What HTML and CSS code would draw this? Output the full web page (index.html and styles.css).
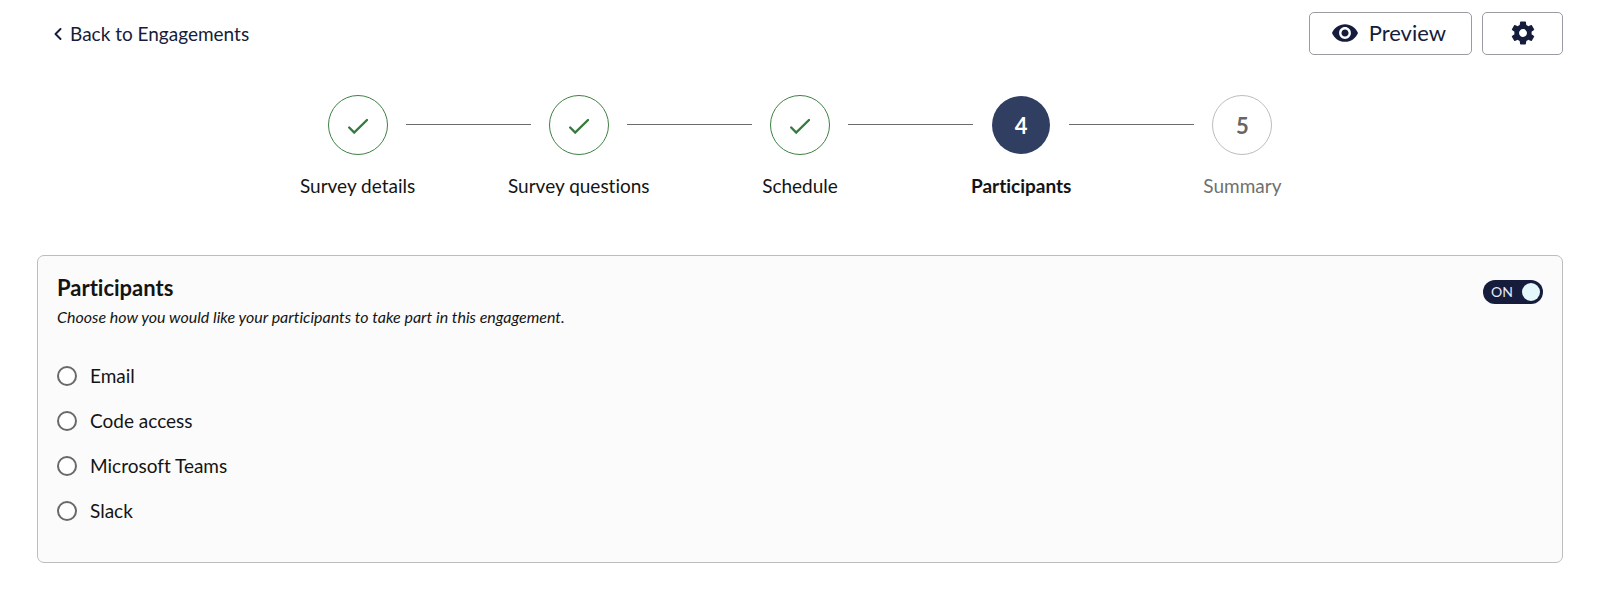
FILE: index.html
```html
<!DOCTYPE html>
<html lang="en">
<head>
<meta charset="utf-8">
<meta name="viewport" content="width=device-width, initial-scale=1">
<title>Participants</title>
<link rel="stylesheet" href="styles.css">
</head>
<body>
<header class="topbar">
  <a class="back" href="#">
    <svg class="back-icon" viewBox="0 0 8 12" aria-hidden="true"><path d="M6.500 1 1.500 6l5 5" fill="none" stroke="currentColor" stroke-width="1.900" stroke-linecap="round" stroke-linejoin="round"/></svg>
    <span>Back to Engagements</span>
  </a>
  <div class="actions">
    <button class="btn" type="button">
      <svg class="eye-icon" viewBox="1 4.500 22 15" aria-hidden="true"><path fill="currentColor" d="M12 4.500C7 4.500 2.730 7.610 1 12c1.730 4.390 6 7.500 11 7.500s9.270-3.110 11-7.500c-1.730-4.390-6-7.500-11-7.500zM12 17c-2.760 0-5-2.240-5-5s2.240-5 5-5 5 2.240 5 5-2.240 5-5 5zm0-8c-1.660 0-3 1.340-3 3s1.340 3 3 3 3-1.340 3-3-1.340-3-3-3z"/></svg>
      <span>Preview</span>
    </button>
    <button class="btn btn-settings" type="button" aria-label="Settings">
      <svg class="gear-icon" viewBox="2 2 20 20" aria-hidden="true"><path fill="currentColor" d="M19.140 12.940c.04-.3.06-.61.06-.94 0-.32-.02-.64-.07-.94l2.030-1.580c.18-.14.23-.41.12-.61l-1.920-3.320c-.12-.22-.37-.29-.59-.22l-2.390.96c-.5-.38-1.030-.7-1.620-.94l-.36-2.540c-.04-.24-.24-.41-.48-.41h-3.840c-.24 0-.43.17-.47.41l-.36 2.540c-.59.24-1.130.57-1.620.94l-2.390-.96c-.22-.08-.47 0-.59.22L2.740 8.870c-.12.21-.08.47.12.61l2.030 1.580c-.05.3-.09.63-.09.94s.02.64.07.94l-2.030 1.580c-.18.14-.23.41-.12.61l1.920 3.320c.12.22.37.29.59.22l2.390-.96c.5.38 1.030.7 1.620.94l.36 2.540c.05.24.24.41.48.41h3.840c.24 0 .44-.17.47-.41l.36-2.540c.59-.24 1.130-.56 1.620-.94l2.390.96c.22.08.47 0 .59-.22l1.920-3.320c.12-.22.07-.47-.12-.61l-2.010-1.580zM12 15.300c-1.820 0-3.300-1.480-3.300-3.300s1.480-3.300 3.300-3.300 3.300 1.480 3.300 3.300-1.480 3.300-3.300 3.300z"/></svg>
    </button>
  </div>
</header>

<main>
  <ol class="steps">
    <li class="step done">
      <span class="marker"><svg class="check-icon" viewBox="0 0 20 16" aria-hidden="true"><path d="M1.200 9.500 6.200 14.500 19 2" fill="none" stroke="currentColor" stroke-width="2.400" stroke-linecap="round"/></svg></span>
      <span class="label">Survey details</span>
    </li>
    <li class="step done">
      <span class="marker"><svg class="check-icon" viewBox="0 0 20 16" aria-hidden="true"><path d="M1.200 9.500 6.200 14.500 19 2" fill="none" stroke="currentColor" stroke-width="2.400" stroke-linecap="round"/></svg></span>
      <span class="label">Survey questions</span>
    </li>
    <li class="step done">
      <span class="marker"><svg class="check-icon" viewBox="0 0 20 16" aria-hidden="true"><path d="M1.200 9.500 6.200 14.500 19 2" fill="none" stroke="currentColor" stroke-width="2.400" stroke-linecap="round"/></svg></span>
      <span class="label">Schedule</span>
    </li>
    <li class="step current" aria-current="step">
      <span class="marker">4</span>
      <span class="label">Participants</span>
    </li>
    <li class="step upcoming">
      <span class="marker">5</span>
      <span class="label">Summary</span>
    </li>
  </ol>

  <section class="card" aria-labelledby="card-title">
    <div class="card-head">
      <div>
        <h2 class="card-title" id="card-title">Participants</h2>
        <p class="card-hint" id="card-hint">Choose how you would like your participants to take part in this engagement.</p>
      </div>
      <label class="switch">
        <input class="switch-input" type="checkbox" role="switch" aria-label="Participants" checked>
        <span class="switch-text">ON</span>
        <span class="switch-knob"></span>
      </label>
    </div>
    <div class="options" role="radiogroup" aria-labelledby="card-hint">
      <label class="option"><input class="radio" type="radio" name="access" value="email"><span>Email</span></label>
      <label class="option"><input class="radio" type="radio" name="access" value="code"><span>Code access</span></label>
      <label class="option"><input class="radio" type="radio" name="access" value="teams"><span>Microsoft Teams</span></label>
      <label class="option"><input class="radio" type="radio" name="access" value="slack"><span>Slack</span></label>
    </div>
  </section>
</main>
</body>
</html>
```
FILE: styles.css
```css
* {
  box-sizing: border-box;
}

body {
  margin: 0;
  padding: 12px 37px 32px;
  background: #fff;
  color: #141414;
  font-family: Lato, "Open Sans", sans-serif;
  font-size: 19px;
  font-variant-ligatures: none;
  line-height: 24px;
}

.topbar {
  display: flex;
  align-items: center;
  justify-content: space-between;
}

.back {
  display: flex;
  align-items: center;
  gap: 8px;
  padding-left: 17px;
  color: #161c3b;
  text-decoration: none;
}

.back-icon {
  width: 8px;
  height: 12px;
}

.actions {
  display: flex;
  gap: 10px;
}

.btn {
  display: flex;
  align-items: center;
  justify-content: center;
  gap: 11px;
  height: 43px;
  padding: 0 25px 1px 22px;
  border: 1px solid #9a9ba3;
  border-radius: 5px;
  background: #fff;
  color: #161c3b;
  font: inherit;
  font-size: 22px;
  cursor: pointer;
}

.btn-settings {
  width: 81px;
  padding: 0 0 1px;
}

.eye-icon {
  width: 26px;
  height: 18px;
}

.gear-icon {
  width: 24px;
  height: 24px;
}

.steps {
  display: grid;
  grid-template-columns: repeat(5, 1fr);
  max-width: 1106px;
  margin: 40px auto 57px;
  padding: 0;
  list-style: none;
}

.step {
  display: grid;
  grid-template-rows: 60px auto;
  grid-template-columns: 100%;
  justify-items: center;
  align-items: center;
  row-gap: 19px;
}

.step + .step::before {
  content: "";
  grid-area: 1 / 1;
  justify-self: start;
  width: calc(100% - 96px);
  height: 1px;
  margin-bottom: 1px;
  margin-left: calc(48px - 50%);
  background: #6b6b6b;
}

.marker {
  grid-area: 1 / 1;
  display: grid;
  place-items: center;
  width: 60px;
  height: 60px;
  padding-top: 2px;
  border: 1px solid #3e8144;
  border-radius: 50%;
  font-size: 22px;
  font-weight: 700;
}

.check-icon {
  width: 20px;
  height: 16px;
  color: #357a3c;
}

.current .marker {
  width: 58px;
  height: 58px;
  border: 0;
  background: #303f61;
  color: #fff;
}

.current .label {
  font-weight: 700;
}

.upcoming .marker {
  border-color: #bdbdbd;
  color: #666;
}

.upcoming .label {
  color: #707070;
}

.card {
  padding: 20px 19px 39px;
  border: 1px solid #bdbdbd;
  border-radius: 7px;
  background: #fbfbfb;
}

.card-head {
  display: flex;
  align-items: flex-start;
  justify-content: space-between;
}

.card-title {
  margin: 0;
  font-size: 22px;
  line-height: 24px;
}

.card-hint {
  margin: 5px 0 0;
  font-size: 16px;
  font-style: italic;
  line-height: 24px;
}

.switch {
  display: flex;
  align-items: center;
  justify-content: space-between;
  width: 60px;
  height: 24px;
  margin-top: 4px;
  padding: 0 3px 0 8px;
  border-radius: 12px;
  background: #161c3b;
  color: #e6ebf5;
  font-size: 14px;
  cursor: pointer;
}

.switch-input {
  position: absolute;
  opacity: 0;
}

.switch-knob {
  width: 18px;
  height: 18px;
  border-radius: 50%;
  background: #e4f8fb;
}

.options {
  display: grid;
  justify-items: start;
  row-gap: 21px;
  margin-top: 35px;
}

.option {
  display: flex;
  align-items: center;
  gap: 13px;
  cursor: pointer;
}

.radio {
  appearance: none;
  width: 20px;
  height: 20px;
  margin: 0;
  border: 2px solid #696969;
  border-radius: 50%;
  background: #fff;
}

.radio:checked {
  border: 6px solid #161c3b;
}
```
